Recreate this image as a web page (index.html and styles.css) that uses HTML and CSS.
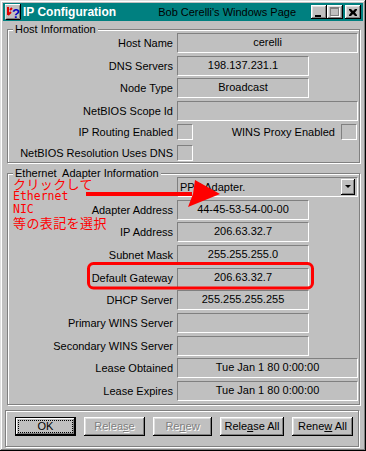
FILE: index.html
```html
<!DOCTYPE html>
<html lang="ja">
<head>
    <meta charset="UTF-8">
    <meta name="viewport" content="width=device-width, initial-scale=1.0">
    <title>IP Configuration</title>
    <link rel="stylesheet" href="styles.css">
</head>
<body>
    <div class="window">
        <div class="title-bar">
            <svg class="app-icon" width="16" height="16" viewBox="0 0 16 16">
                <rect x="0" y="0" width="16" height="16" fill="#c0c0c0"/>
                <path d="M0 15.5V0.5H15.5" stroke="#fff" fill="none"/>
                <path d="M0.5 15.5H15.5V0" stroke="#000" fill="none"/>
                <path d="M1.5 14.5H14.5V1.5" stroke="#808080" fill="none"/>
                <path d="M3 3V11M3 11L6 8M5 6L7 4" stroke="#e00000" stroke-width="2" fill="none"/>
                <text x="7" y="14" font-family="Liberation Sans, sans-serif" font-weight="bold" font-size="13" fill="#0000c0">?</text>
            </svg>
            <span class="title">IP Configuration</span>
            <span class="site">Bob Cerelli's Windows Page</span>
            <div class="controls">
                <button class="ctl"><span class="min-glyph"></span></button>
                <button class="ctl"><span class="max-glyph"></span></button>
                <button class="ctl close">
                    <svg width="8" height="7" viewBox="0 0 8 7">
                        <path d="M0 0h2l2 2 2-2h2v1l-2 2.5 2 2.5v1h-2l-2-2-2 2h-2v-1l2-2.5-2-2.5z" fill="#000"/>
                    </svg>
                </button>
            </div>
        </div>

        <div class="client">
            <div class="group host">
                <div class="group-title">Host Information</div>
                <div class="rows host-rows">
                    <span class="label">Host Name</span>
                    <span class="field">cerelli</span>
                    <span class="label">DNS Servers</span>
                    <span class="field short">198.137.231.1</span>
                    <span class="label">Node Type</span>
                    <span class="field short">Broadcast</span>
                    <span class="label">NetBIOS Scope Id</span>
                    <span class="field"></span>
                    <span class="label">IP Routing Enabled</span>
                    <span class="check-row">
                        <span class="check"></span>
                        <span class="label grow">WINS Proxy Enabled</span>
                        <span class="check"></span>
                    </span>
                    <span class="label">NetBIOS Resolution Uses DNS</span>
                    <span class="check-row">
                        <span class="check"></span>
                    </span>
                </div>
            </div>

            <div class="group ethernet">
                <div class="group-title">Ethernet&nbsp; Adapter Information</div>
                <div class="rows eth-rows">
                    <span class="spacer"></span>
                    <div class="combo">
                        <span class="combo-text">PPP Adapter.</span>
                        <span class="combo-btn"><span class="arrow-down"></span></span>
                    </div>
                    <span class="label">Adapter Address</span>
                    <span class="field short">44-45-53-54-00-00</span>
                    <span class="label">IP Address</span>
                    <span class="field short">206.63.32.7</span>
                    <span class="label">Subnet Mask</span>
                    <span class="field short">255.255.255.0</span>
                    <span class="label">Default Gateway</span>
                    <span class="field short">206.63.32.7</span>
                    <span class="label">DHCP Server</span>
                    <span class="field short">255.255.255.255</span>
                    <span class="label">Primary WINS Server</span>
                    <span class="field short"></span>
                    <span class="label">Secondary WINS Server</span>
                    <span class="field short"></span>
                    <span class="label">Lease Obtained</span>
                    <span class="field">Tue Jan 1 80 0:00:00</span>
                    <span class="label">Lease Expires</span>
                    <span class="field">Tue Jan 1 80 0:00:00</span>
                </div>
            </div>

            <div class="button-panel">
                <button class="btn default"><span class="focus">OK</span></button>
                <button class="btn" disabled>Relea<u>s</u>e</button>
                <button class="btn narrow" disabled>Re<u>n</u>ew</button>
                <button class="btn wide">Rele<u>a</u>se All</button>
                <button class="btn">Rene<u>w</u> All</button>
            </div>
        </div>

        <!-- red annotations drawn over the dialog -->
        <div class="note">
            <div class="jp">クリックして</div>
            <div class="en">Ethernet</div>
            <div class="en">NIC</div>
            <div class="jp">等の表記を選択</div>
        </div>
        <svg class="marks" width="366" height="451" viewBox="0 0 366 451">
            <rect x="86" y="192" width="106" height="4" fill="#ff0000"/>
            <polygon points="195,180 220,194 188,207 193,194" fill="#ff0000"/>
            <rect x="88.5" y="263.5" width="224" height="24.5" rx="5" ry="5" fill="none" stroke="#ff0000" stroke-width="3"/>
        </svg>
    </div>
</body>
</html>
```

FILE: styles.css
```css
body {
    margin: 0;
    background: #c0c0c0;
    font-family: "Liberation Sans", Arial, sans-serif;
    font-size: 11px;
    color: #000;
}

.window {
    position: relative;
    width: 366px;
    height: 451px;
    box-sizing: border-box;
    padding: 3px;
    background: #c0c0c0;
    box-shadow: inset -1px -1px #000, inset 1px 1px #dfdfdf,
                inset -2px -2px #808080, inset 2px 2px #fff;
}

/* title bar */
.title-bar {
    height: 18px;
    background: #008080;
    display: flex;
    align-items: center;
    padding: 0 2px;
}

.app-icon {
    display: block;
    margin-right: 2px;
}

.title {
    color: #fff;
    font-weight: bold;
    font-size: 12px;
}

.site {
    margin-left: auto;
    margin-right: 15px;
    color: #000;
}

.controls {
    display: flex;
    align-items: center;
}

.ctl {
    width: 16px;
    height: 14px;
    padding: 0;
    border: 0;
    background: #c0c0c0;
    box-shadow: inset -1px -1px #000, inset 1px 1px #fff,
                inset -2px -2px #808080, inset 2px 2px #dfdfdf;
    display: flex;
    align-items: center;
    justify-content: center;
    position: relative;
}

.ctl.close {
    margin-left: 2px;
}

.min-glyph {
    width: 6px;
    height: 2px;
    background: #000;
    margin: 7px 3px 0 0;
}

.max-glyph {
    width: 9px;
    height: 9px;
    box-sizing: border-box;
    border: 1px solid #808080;
    border-top-width: 2px;
    box-shadow: 1px 1px 0 #fff;
    margin: 0 1px 1px 0;
}

.ctl.close svg {
    display: block;
    margin-left: -1px;
}

/* dialog body */
.client {
    padding: 8px 3px 0 4px;
}

.group {
    position: relative;
    border: 1px solid #808080;
    box-shadow: 1px 1px 0 #fff, inset 1px 1px 0 #fff;
}

.group-title {
    position: absolute;
    top: -7px;
    left: 5px;
    padding: 0 2px;
    background: #c0c0c0;
    line-height: 13px;
    white-space: nowrap;
}

.host {
    padding: 3px 0 0;
}

.ethernet {
    margin-top: 10px;
    padding: 3px 0 3px;
}

.rows {
    display: grid;
    grid-template-columns: 165px 181px;
    column-gap: 4px;
    row-gap: 2.6px;
}

.host-rows {
    grid-template-rows: repeat(4, 20px) 18px 18px;
}

.eth-rows {
    grid-auto-rows: 20px;
    row-gap: 2.67px;
}

.label {
    align-self: center;
    text-align: right;
    white-space: nowrap;
}

.field {
    height: 20px;
    box-sizing: border-box;
    border: 1px solid;
    border-color: #808080 #fff #fff #808080;
    text-align: center;
    line-height: 17px;
}

.field.short {
    width: 132px;
}

.check-row {
    display: flex;
    align-items: center;
}

.check-row .grow {
    flex: 1;
    margin-right: 6px;
}

.check {
    width: 16px;
    height: 16px;
    box-sizing: border-box;
    border: 1px solid;
    border-color: #808080 #fff #fff #808080;
}

.check-row .check:last-child {
    margin-right: 1px;
}

.combo {
    height: 20px;
    box-sizing: border-box;
    border: 1px solid;
    border-color: #808080 #fff #fff #808080;
    display: flex;
    align-items: center;
}

.combo-text {
    flex: 1;
    padding-left: 2px;
}

.combo-btn {
    width: 14px;
    height: 16px;
    box-sizing: border-box;
    margin-right: 2px;
    box-shadow: inset -1px -1px #000, inset 1px 1px #fff, inset -2px -2px #808080;
    display: flex;
    align-items: center;
    justify-content: center;
}

.arrow-down {
    width: 0;
    height: 0;
    border-left: 3px solid transparent;
    border-right: 3px solid transparent;
    border-top: 3px solid #000;
    margin: 0 1px 1px 0;
}

/* bottom buttons */
.button-panel {
    margin: 5px 1px 0 -2px;
    height: 37px;
    box-sizing: border-box;
    border: 1px solid #808080;
    box-shadow: 1px 1px 0 #fff, inset 1px 1px 0 #fff;
    display: flex;
    gap: 8px;
    padding: 6px 0 0 9px;
}

.btn {
    width: 61px;
    height: 19px;
    box-sizing: border-box;
    padding: 0;
    border: 0;
    background: #c0c0c0;
    box-shadow: inset -1px -1px #000, inset 1px 1px #fff,
                inset -2px -2px #808080, inset 2px 2px #dfdfdf;
    font-family: "Liberation Sans", Arial, sans-serif;
    font-size: 11px;
    color: #000;
}

.btn.narrow {
    width: 59px;
}

.btn.wide {
    width: 64px;
}

.btn u {
    text-underline-offset: 1px;
}

.btn:disabled {
    color: #808080;
    text-shadow: 1px 1px 0 #fff;
}

.btn.default {
    box-shadow: inset 0 0 0 1px #000, inset -2px -2px #000, inset 2px 2px #fff,
                inset -3px -3px #808080;
    padding: 3px;
}

.btn.default .focus {
    display: flex;
    align-items: center;
    justify-content: center;
    height: 100%;
    box-sizing: border-box;
    border: 1px dotted #000;
}

/* red annotations */
.note {
    position: absolute;
    left: 13px;
    top: 177px;
    color: #ff0000;
    line-height: 13px;
}

.note .jp {
    font-family: "Noto Sans CJK JP", sans-serif;
    font-size: 13px;
    letter-spacing: 0.4px;
}

.note .en {
    font-family: "DejaVu Sans Mono", monospace;
    font-size: 11.5px;
}

.marks {
    position: absolute;
    left: 0;
    top: 0;
    pointer-events: none;
}
```
